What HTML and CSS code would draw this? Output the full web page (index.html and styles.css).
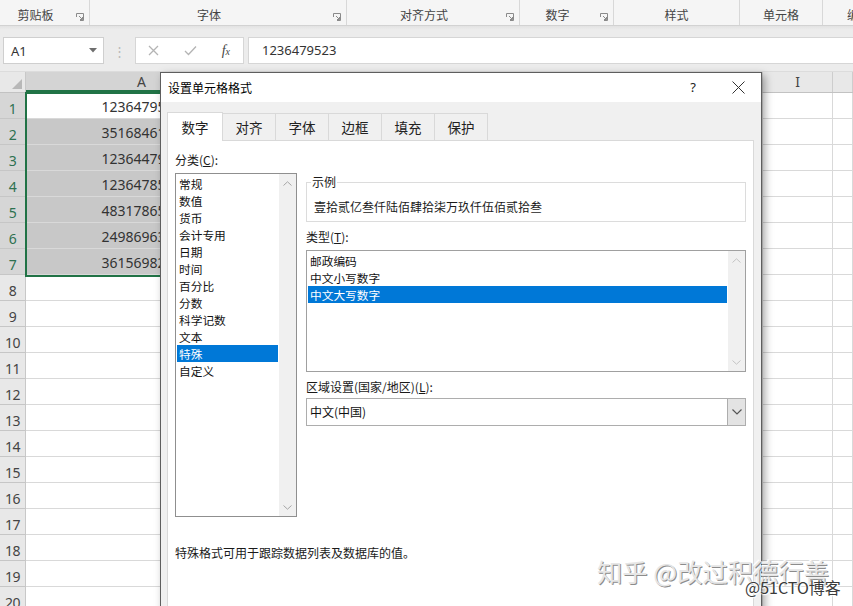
FILE: index.html
```html
<!DOCTYPE html>
<html lang="zh-CN">
<head>
<meta charset="utf-8">
<title>设置单元格格式</title>
<link rel="stylesheet" href="styles.css">
</head>
<body>
<div class="app">
  <div class="ribbon">
    <div class="grp w1"><span class="glabel">剪贴板</span><span class="launch"><svg width="8" height="8" viewBox="0 0 8 8"><path d="M0.5 4V0.5H7.5V7.5H4" fill="none" stroke="#8a8a8a"/><path d="M3 3L6.5 6.5M6.5 4V6.5H4" fill="none" stroke="#8a8a8a"/></svg></span></div>
    <div class="grp w2"><span class="glabel">字体</span><span class="launch"><svg width="8" height="8" viewBox="0 0 8 8"><path d="M0.5 4V0.5H7.5V7.5H4" fill="none" stroke="#8a8a8a"/><path d="M3 3L6.5 6.5M6.5 4V6.5H4" fill="none" stroke="#8a8a8a"/></svg></span></div>
    <div class="grp w3"><span class="glabel">对齐方式</span><span class="launch"><svg width="8" height="8" viewBox="0 0 8 8"><path d="M0.5 4V0.5H7.5V7.5H4" fill="none" stroke="#8a8a8a"/><path d="M3 3L6.5 6.5M6.5 4V6.5H4" fill="none" stroke="#8a8a8a"/></svg></span></div>
    <div class="grp w4"><span class="glabel">数字</span><span class="launch"><svg width="8" height="8" viewBox="0 0 8 8"><path d="M0.5 4V0.5H7.5V7.5H4" fill="none" stroke="#8a8a8a"/><path d="M3 3L6.5 6.5M6.5 4V6.5H4" fill="none" stroke="#8a8a8a"/></svg></span></div>
    <div class="grp w5"><span class="glabel">样式</span></div>
    <div class="grp w6"><span class="glabel">单元格</span></div>
    <div class="grp w7"><span class="glabel left">编辑</span></div>
  </div>
  <div class="ribbon-edge"></div>
  <div class="fbar">
    <div class="namebox"><span>A1</span><svg width="8" height="5" viewBox="0 0 8 5"><path d="M0 0H8L4 4.5Z" fill="#6e6e6e"/></svg></div>
    <div class="fdots">⋮</div>
    <div class="fbtns">
      <svg width="11" height="11" viewBox="0 0 11 11"><path d="M1 1L10 10M10 1L1 10" stroke="#b4b4b4" stroke-width="1.3"/></svg>
      <svg width="13" height="11" viewBox="0 0 13 11"><path d="M1 6L4.5 9.5L12 1.5" fill="none" stroke="#b4b4b4" stroke-width="1.3"/></svg>
      <span class="fx">f<span>x</span></span>
    </div>
    <div class="finput">1236479523</div>
  </div>
  <div class="sheet">
    <div class="hrow">
      <div class="corner"><svg width="10" height="10" viewBox="0 0 10 10"><path d="M10 0V10H0Z" fill="#b8b8b8"/></svg></div>
      <div class="ch ca hsel">A</div>
      <div class="ch cmid"></div>
      <div class="ch ci">I</div>
      <div class="ch cj"></div>
    </div>
    <div class="row"><div class="rh rsel">1</div><div class="c ca">1236479523</div><div class="c cmid"></div><div class="c ci"></div><div class="c cj"></div></div>
    <div class="row"><div class="rh rsel">2</div><div class="c ca sel">3516846125</div><div class="c cmid"></div><div class="c ci"></div><div class="c cj"></div></div>
    <div class="row"><div class="rh rsel">3</div><div class="c ca sel">1236447985</div><div class="c cmid"></div><div class="c ci"></div><div class="c cj"></div></div>
    <div class="row"><div class="rh rsel">4</div><div class="c ca sel">1236478563</div><div class="c cmid"></div><div class="c ci"></div><div class="c cj"></div></div>
    <div class="row"><div class="rh rsel">5</div><div class="c ca sel">4831786542</div><div class="c cmid"></div><div class="c ci"></div><div class="c cj"></div></div>
    <div class="row"><div class="rh rsel">6</div><div class="c ca sel">2498696371</div><div class="c cmid"></div><div class="c ci"></div><div class="c cj"></div></div>
    <div class="row"><div class="rh rsel">7</div><div class="c ca sel">3615698247</div><div class="c cmid"></div><div class="c ci"></div><div class="c cj"></div></div>
    <div class="row"><div class="rh">8</div><div class="c ca"></div><div class="c cmid"></div><div class="c ci"></div><div class="c cj"></div></div>
    <div class="row"><div class="rh">9</div><div class="c ca"></div><div class="c cmid"></div><div class="c ci"></div><div class="c cj"></div></div>
    <div class="row"><div class="rh">10</div><div class="c ca"></div><div class="c cmid"></div><div class="c ci"></div><div class="c cj"></div></div>
    <div class="row"><div class="rh">11</div><div class="c ca"></div><div class="c cmid"></div><div class="c ci"></div><div class="c cj"></div></div>
    <div class="row"><div class="rh">12</div><div class="c ca"></div><div class="c cmid"></div><div class="c ci"></div><div class="c cj"></div></div>
    <div class="row"><div class="rh">13</div><div class="c ca"></div><div class="c cmid"></div><div class="c ci"></div><div class="c cj"></div></div>
    <div class="row"><div class="rh">14</div><div class="c ca"></div><div class="c cmid"></div><div class="c ci"></div><div class="c cj"></div></div>
    <div class="row"><div class="rh">15</div><div class="c ca"></div><div class="c cmid"></div><div class="c ci"></div><div class="c cj"></div></div>
    <div class="row"><div class="rh">16</div><div class="c ca"></div><div class="c cmid"></div><div class="c ci"></div><div class="c cj"></div></div>
    <div class="row"><div class="rh">17</div><div class="c ca"></div><div class="c cmid"></div><div class="c ci"></div><div class="c cj"></div></div>
    <div class="row"><div class="rh">18</div><div class="c ca"></div><div class="c cmid"></div><div class="c ci"></div><div class="c cj"></div></div>
    <div class="row"><div class="rh">19</div><div class="c ca"></div><div class="c cmid"></div><div class="c ci"></div><div class="c cj"></div></div>
    <div class="row"><div class="rh">20</div><div class="c ca"></div><div class="c cmid"></div><div class="c ci"></div><div class="c cj"></div></div>
    <div class="selbox"></div>
  </div>

  <div class="dialog">
    <div class="dtitle">
      <span class="dt-text">设置单元格格式</span>
      <span class="dhelp">?</span>
      <span class="dclose"><svg width="13" height="13" viewBox="0 0 13 13"><path d="M0.5 0.5L12.5 12.5M12.5 0.5L0.5 12.5" stroke="#333" stroke-width="1"/></svg></span>
    </div>
    <div class="dbody">
      <div class="tabs">
        <div class="tab active">数字</div>
        <div class="tab">对齐</div>
        <div class="tab">字体</div>
        <div class="tab">边框</div>
        <div class="tab">填充</div>
        <div class="tab">保护</div>
      </div>
      <div class="panel">
        <div class="cols">
          <div class="leftcol">
            <div class="lbl">分类(<u>C</u>):</div>
            <div class="listbox cat">
              <div class="items">
                <div class="it">常规</div>
                <div class="it">数值</div>
                <div class="it">货币</div>
                <div class="it">会计专用</div>
                <div class="it">日期</div>
                <div class="it">时间</div>
                <div class="it">百分比</div>
                <div class="it">分数</div>
                <div class="it">科学记数</div>
                <div class="it">文本</div>
                <div class="it selected">特殊</div>
                <div class="it">自定义</div>
              </div>
              <div class="vscroll">
                <svg width="9" height="5" viewBox="0 0 9 5"><path d="M0.5 4.5L4.5 0.8L8.5 4.5" fill="none" stroke="#a6a6a6"/></svg>
                <svg width="9" height="5" viewBox="0 0 9 5"><path d="M0.5 0.5L4.5 4.2L8.5 0.5" fill="none" stroke="#a6a6a6"/></svg>
              </div>
            </div>
          </div>
          <div class="rightcol">
            <fieldset class="sample">
              <legend>示例</legend>
              <div class="sample-text">壹拾贰亿叁仟陆佰肆拾柒万玖仟伍佰贰拾叁</div>
            </fieldset>
            <div class="lbl gap7">类型(<u>T</u>):</div>
            <div class="listbox types">
              <div class="items">
                <div class="it">邮政编码</div>
                <div class="it">中文小写数字</div>
                <div class="it selected">中文大写数字</div>
              </div>
              <div class="vscroll">
                <svg width="9" height="5" viewBox="0 0 9 5"><path d="M0.5 4.5L4.5 0.8L8.5 4.5" fill="none" stroke="#c4c4c4"/></svg>
                <svg width="9" height="5" viewBox="0 0 9 5"><path d="M0.5 0.5L4.5 4.2L8.5 0.5" fill="none" stroke="#c4c4c4"/></svg>
              </div>
            </div>
            <div class="lbl gap7">区域设置(国家/地区)(<u>L</u>):</div>
            <div class="select">
              <span class="sval">中文(中国)</span>
              <span class="sbtn"><svg width="10" height="6" viewBox="0 0 10 6"><path d="M0.5 0.5L5 5L9.5 0.5" fill="none" stroke="#555" stroke-width="1.2"/></svg></span>
            </div>
          </div>
        </div>
        <div class="desc">特殊格式可用于跟踪数据列表及数据库的值。</div>
      </div>
    </div>
  </div>

  <div class="wm1">知乎 @改过积德行善</div>
  <div class="wm2">@51CTO博客</div>
</div>
</body>
</html>
```
FILE: styles.css
```css
* { box-sizing: border-box; }
html, body { margin: 0; padding: 0; }
body {
  width: 853px;
  height: 606px;
  overflow: hidden;
  background: #fff;
  font-family: "Noto Sans CJK SC", "Noto Sans", sans-serif;
  font-size: 12px;
  color: #1e1e1e;
}
.app {
  position: relative;
  width: 853px;
  height: 606px;
  overflow: hidden;
  display: flex;
  flex-direction: column;
}

/* ribbon */
.ribbon {
  display: flex;
  height: 25px;
  background: #f5f5f5;
  flex-shrink: 0;
}
.grp {
  display: flex;
  align-items: center;
  height: 25px;
  border-right: 1px solid #d8d8d8;
  flex-shrink: 0;
  padding-top: 5px;
}
.glabel {
  flex: 1;
  text-align: center;
  line-height: 16px;
  color: #444;
  white-space: nowrap;
  overflow: hidden;
}
.glabel.left { text-align: left; padding-left: 24px; }
.launch {
  width: 18px;
  display: flex;
  justify-content: center;
  padding-top: 4px;
}
.w1 { width: 90px; }
.w2 { width: 257px; }
.w3 { width: 173px; }
.w4 { width: 94px; }
.w5 { width: 126px; }
.w6 { width: 83px; }
.w7 { flex: 1; border-right: 0; }

.ribbon-edge {
  height: 5px;
  flex-shrink: 0;
  border-top: 1px solid #d2d2d2;
  background: linear-gradient(#e2e2e2, #ececec);
}

/* formula bar */
.fbar {
  height: 42px;
  flex-shrink: 0;
  background: #ececec;
  display: flex;
  align-items: flex-start;
  padding: 7px 0 0 3px;
  border-bottom: 1px solid #dcdcdc;
}
.namebox {
  width: 101px;
  height: 27px;
  background: #fff;
  border: 1px solid #cfcfcf;
  display: flex;
  align-items: center;
  justify-content: space-between;
  padding: 0 6px 0 7px;
  font-family: "Noto Sans", sans-serif;
  font-size: 13px;
  color: #333;
}
.fdots {
  width: 31px;
  height: 27px;
  text-align: center;
  line-height: 27px;
  color: #b8b8b8;
  font-size: 13px;
}
.fbtns {
  width: 109px;
  height: 27px;
  background: #fff;
  border: 1px solid #d6d6d6;
  display: flex;
  align-items: center;
  justify-content: space-between;
  padding: 0 13px 0 12px;
}
.fx {
  font-family: "Liberation Serif", serif;
  font-style: italic;
  font-size: 14px;
  color: #444;
}
.fx span { font-size: 10px; }
.finput {
  flex: 1;
  height: 27px;
  margin-left: 4px;
  background: #fff;
  border: 1px solid #d6d6d6;
  border-right: 0;
  padding-left: 13px;
  line-height: 25px;
  font-family: "Noto Sans", sans-serif;
  font-size: 13px;
  color: #333;
}

/* sheet */
.sheet {
  position: relative;
  flex: 1;
  overflow: hidden;
}
.hrow {
  display: flex;
  height: 21px;
  background: #e8e8e8;
  border-bottom: 1px solid #c2c2c2;
}
.corner {
  width: 26px;
  display: flex;
  align-items: flex-end;
  justify-content: flex-end;
  padding: 0 3px 3px 0;
  border-right: 1px solid #c8c8c8;
}
.ch {
  text-align: center;
  line-height: 20px;
  font-family: "Noto Sans", sans-serif;
  font-size: 14px;
  color: #444;
  border-right: 1px solid #cdcdcd;
}
.ch.hsel { background: #d4d4d4; border-bottom: 2px solid #217346; }
.ca { width: 232px; flex-shrink: 0; }
.cmid { width: 505px; flex-shrink: 0; }
.ci { width: 70px; flex-shrink: 0; }
.cj { flex: 1; }

.row {
  display: flex;
  height: 26px;
}
.rh {
  width: 26px;
  flex-shrink: 0;
  background: #e8e8e8;
  border-right: 1px solid #c8c8c8;
  border-bottom: 1px solid #c6c6c6;
  text-align: center;
  padding-top: 6px;
  line-height: 20px;
  font-family: "Noto Sans", sans-serif;
  font-size: 14px;
  color: #444;
  letter-spacing: -0.5px;
  overflow: hidden;
}
.rh.rsel { background: #d6d6d6; color: #2e7150; }
.c {
  border-right: 1px solid #d9d9d9;
  border-bottom: 1px solid #d9d9d9;
  text-align: center;
  padding-top: 5px;
  line-height: 18px;
  font-family: "Noto Sans", sans-serif;
  font-size: 14px;
  color: #333;
  white-space: nowrap;
  overflow: hidden;
}
.c.sel { background: #c8c8c8; }
.selbox {
  position: absolute;
  left: 25px;
  top: 20px;
  width: 236px;
  height: 185px;
  border: 2px solid #217346;
  pointer-events: none;
}

/* dialog */
.dialog {
  position: absolute;
  left: 160px;
  top: 72px;
  width: 602px;
  height: 560px;
  border: 1px solid #5e5e5e;
  background: #f0f0f0;
  box-shadow: 3px 3px 8px rgba(0, 0, 0, 0.35);
  display: flex;
  flex-direction: column;
}
.dtitle {
  height: 29px;
  flex-shrink: 0;
  background: #fff;
  display: flex;
  align-items: center;
  padding-left: 7px;
  padding-bottom: 1px;
}
.dt-text { flex: 1; font-size: 12px; color: #000; }
.dhelp {
  width: 20px;
  text-align: center;
  font-family: "Noto Sans", sans-serif;
  font-size: 13px;
  color: #222;
  margin-right: 29px;
}
.dclose {
  width: 13px;
  height: 13px;
  margin-right: 16px;
  display: flex;
}
.dbody {
  flex: 1;
  padding: 11px 7px 0 6px;
  display: flex;
  flex-direction: column;
}
.tabs {
  display: flex;
  height: 27px;
  align-items: flex-end;
}
.tab {
  width: 54px;
  height: 27px;
  border: 1px solid #d9d9d9;
  border-bottom: 0;
  margin-right: -1px;
  text-align: center;
  line-height: 26px;
  font-size: 13.5px;
  color: #222;
  background: #f0f0f0;
}
.tab.active {
  width: 56px;
  height: 29px;
  background: #fff;
  position: relative;
  z-index: 1;
  margin-bottom: -1px;
  line-height: 28px;
}
.panel {
  flex: 1;
  background: #fff;
  border: 1px solid #d9d9d9;
  padding: 11px 0 0 7px;
}
.cols { display: flex; }
.leftcol { width: 122px; }
.rightcol { width: 440px; margin-left: 9px; }
.lbl { line-height: 16px; font-size: 12px; color: #1a1a1a; }
.lbl u { text-decoration: underline; }
.lbl.gap7 { margin-top: 7px; }

.listbox {
  display: flex;
  border: 1px solid #8f8f8f;
  margin-top: 5px;
  background: #fff;
}
.listbox.cat { height: 344px; }
.listbox.types { height: 122px; border-color: #a0a0a0; }
.items { flex: 1; margin: 1px; }
.it {
  height: 17px;
  line-height: 17px;
  padding-left: 2px;
  font-size: 11.7px;
  color: #111;
  white-space: nowrap;
}
.it.selected { background: #0078d7; color: #fff; }
.vscroll {
  width: 17px;
  background: #f0f0f0;
  display: flex;
  flex-direction: column;
  justify-content: space-between;
  align-items: center;
  padding: 7px 0 6px;
}

.sample {
  margin: 22px 0 0 0;
  padding: 0 3px 4px 3px;
  border: 1px solid #dcdcdc;
  height: 48px;
}
.sample legend {
  padding: 0 1px;
  margin-left: 1px;
  font-size: 12px;
  line-height: 16px;
  color: #1a1a1a;
}
.sample-text {
  margin-top: 9px;
  padding-left: 4px;
  line-height: 16px;
  font-size: 12px;
  color: #1a1a1a;
}

.select {
  margin-top: 3px;
  height: 28px;
  border: 1px solid #adadad;
  display: flex;
  align-items: stretch;
  background: #fff;
}
.sval { flex: 1; padding-left: 3px; line-height: 26px; font-size: 12px; color: #111; }
.sbtn {
  width: 18px;
  background: #e3e3e3;
  border-left: 1px solid #adadad;
  display: flex;
  align-items: center;
  justify-content: center;
}
.desc {
  margin-top: 28px;
  line-height: 16px;
  font-size: 12px;
  color: #1a1a1a;
}

/* watermarks */
.wm1 {
  position: absolute;
  left: 597px;
  top: 555px;
  font-size: 25.3px;
  line-height: 32px;
  color: #e6e6e6;
  text-shadow: 1px 1px 0 #8c8c8c, -1px -1px 0 #ffffff;
  white-space: nowrap;
}
.wm2 {
  position: absolute;
  left: 745px;
  top: 577px;
  font-size: 16px;
  line-height: 20px;
  color: #3a3a3a;
  text-shadow: 0 0 2px #fff, 0 0 2px #fff, 1px 1px 1px #fff;
  white-space: nowrap;
}
```
